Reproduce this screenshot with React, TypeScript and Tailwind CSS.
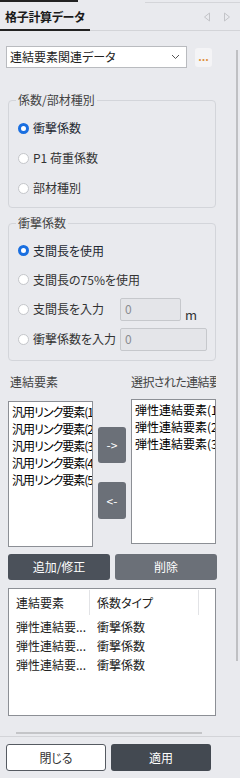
import React from "react";

const left = ["汎用リンク要素(1)", "汎用リンク要素(2)", "汎用リンク要素(3)", "汎用リンク要素(4)", "汎用リンク要素(5)"];
const right = ["弾性連結要素(1)", "弾性連結要素(2)", "弾性連結要素(3)"];

function Radio({ on, label }: { on?: boolean; label: string }) {
  return (
    <label className="flex items-center gap-[4px] ml-[2px] whitespace-nowrap">
      {on ? (
        <span className="w-[11px] h-[11px] rounded-full border-[3px] border-[#1a6fe0] bg-white shrink-0" />
      ) : (
        <span className="w-[11px] h-[11px] rounded-full border border-[#c4c6ca] bg-white shrink-0" />
      )}
      <span className={on ? "text-[#1f2933]" : "text-[#333]"}>{label}</span>
    </label>
  );
}

export default function App() {
  return (
    <div className="relative w-[240px] h-[778px] overflow-hidden bg-[#e9eaee] text-[12px] leading-[16px] text-[#222] font-['Noto_Sans_CJK_JP',sans-serif] [font-feature-settings:'palt']">
      {/* top strip */}
      <div className="flex h-[3px]">
        <div className="w-[78px] h-[2px] bg-[#222]" />
        <div className="ml-[67px] mt-[2px] flex-1 h-px bg-[#d4d5d9]" />
      </div>

      {/* tab header */}
      <div className="flex h-[28px] items-center justify-between border-b border-[#d3d4d8]">
        <div className="relative h-full w-[90px] pl-[5px] flex items-center whitespace-nowrap font-bold text-[12px] tracking-[-0.3px] text-[#1a1a1a]">
          格子計算データ
          <div className="absolute left-0 bottom-[-1px] w-[90px] h-[2px] bg-[#222]" />
        </div>
        <div className="flex items-center gap-[12px] pr-[9px]">
          <svg width="8" height="10" viewBox="0 0 8 10">
            <path d="M6.5 1 L1.5 5 L6.5 9 Z" fill="none" stroke="#c3c4c8" strokeWidth="1" />
          </svg>
          <svg width="8" height="10" viewBox="0 0 8 10">
            <path d="M1.5 1 L6.5 5 L1.5 9 Z" fill="none" stroke="#c3c4c8" strokeWidth="1" />
          </svg>
        </div>
      </div>

      {/* select row */}
      <div className="flex items-start mt-[15px] pl-[6px]">
        <div className="flex w-[181px] h-[22px] items-center justify-between border border-[#b9bbbf] bg-white pl-[3px] pr-[6px] text-[12px]">
          <span>連結要素関連データ</span>
          <svg width="9" height="6" viewBox="0 0 9 6">
            <path d="M1 1 L4.5 4.5 L8 1" fill="none" stroke="#555" strokeWidth="1" />
          </svg>
        </div>
        <div className="ml-[8px] mt-[2px] w-[17px] h-[19px] rounded-[3px] bg-[#f4f4f6] flex items-end justify-center pb-[5px] text-[#e0913c] text-[11px] leading-none font-bold">
          ...
        </div>
      </div>

      {/* fieldset 1 */}
      <fieldset className="mx-[8px] mt-[24px] w-[208px] rounded-[4px] border border-[#d3d5da] px-[7px] pb-[4px]">
        <legend className="px-[2px] text-[#444]">係数/部材種別</legend>
        <div className="flex flex-col pt-[5px]">
          <div className="h-[30px] flex items-center"><Radio on label="衝撃係数" /></div>
          <div className="h-[30px] flex items-center"><Radio label="P1 荷重係数" /></div>
          <div className="h-[30px] flex items-center"><Radio label="部材種別" /></div>
        </div>
      </fieldset>

      {/* fieldset 2 */}
      <fieldset className="mx-[8px] mt-[7px] w-[208px] rounded-[4px] border border-[#d3d5da] px-[7px] pb-[6px]">
        <legend className="px-[2px] text-[#444]">衝撃係数</legend>
        <div className="flex flex-col pt-[5px]">
          <div className="h-[29px] flex items-center"><Radio on label="支間長を使用" /></div>
          <div className="h-[29px] flex items-center"><Radio label="支間長の75%を使用" /></div>
          <div className="h-[30px] flex items-center">
            <div className="w-[104px]"><Radio label="支間長を入力" /></div>
            <div className="w-[61px] h-[23px] border border-[#c6c8cc] rounded-[2px] bg-[#e4e5e9] pl-[4px] flex items-center text-[#8a8c90]">0</div>
            <span className="self-end ml-[4px] mb-[1px] text-[13px] text-[#333]">m</span>
          </div>
          <div className="h-[30px] flex items-center">
            <div className="w-[104px]"><Radio label="衝撃係数を入力" /></div>
            <div className="w-[87px] h-[23px] border border-[#c6c8cc] rounded-[2px] bg-[#e4e5e9] pl-[4px] flex items-center text-[#8a8c90]">0</div>
          </div>
        </div>
      </fieldset>

      {/* lists */}
      <div className="flex mt-[13px] pl-[10px] text-[#444]">
        <div className="w-[121px]">連結要素</div>
        <div className="w-[85px] overflow-hidden whitespace-nowrap tracking-[-0.6px]">選択された連結要素</div>
      </div>
      <div className="flex items-start mt-[9px] pl-[8px]">
        <div className="mt-[2px] w-[85px] h-[146px] overflow-hidden border border-[#8c8f95] bg-white pl-[3px] pt-[1px] leading-[17px] text-black tracking-[-1px]">
          {left.map((t) => (
            <div key={t} className="whitespace-nowrap">{t}</div>
          ))}
        </div>
        <div className="flex flex-col w-[38px] items-center pt-[28px] gap-[19px]">
          <div className="w-[28px] h-[36px] rounded-[3px] bg-[#6b7078] text-white flex items-center justify-center text-[12px]">-&gt;</div>
          <div className="w-[28px] h-[37px] rounded-[3px] bg-[#6b7078] text-white flex items-center justify-center text-[12px]">&lt;-</div>
        </div>
        <div className="w-[85px] h-[145px] overflow-hidden border border-[#8c8f95] bg-white pl-[3px] pt-[1px] leading-[17px] text-black">
          {right.map((t) => (
            <div key={t} className="whitespace-nowrap">{t}</div>
          ))}
        </div>
      </div>

      {/* add / delete */}
      <div className="flex gap-[5px] mt-[7px] pl-[8px]">
        <div className="w-[102px] h-[26px] rounded-[3px] bg-[#4b515a] text-white flex items-center justify-center">追加/修正</div>
        <div className="w-[102px] h-[26px] rounded-[3px] bg-[#6b7078] text-white flex items-center justify-center">削除</div>
      </div>

      {/* table */}
      <div className="mx-[8px] mt-[8px] w-[208px] h-[128px] border border-[#8c8f95] bg-white text-[#222]">
        <div className="flex h-[25px] mt-[1px] items-center">
          <div className="w-[81px] pl-[7px] h-[25px] flex items-center border-r border-[#e2e3e6]">連結要素</div>
          <div className="w-[109px] pl-[7px] h-[25px] flex items-center border-r border-[#e2e3e6]">係数タイプ</div>
        </div>
        <div className="flex flex-col leading-[19px] pt-[2px]">
          {[1, 2, 3].map((i) => (
            <div key={i} className="flex">
              <div className="w-[81px] pl-[7px] whitespace-nowrap">弾性連結要...</div>
              <div className="pl-[7px]">衝撃係数</div>
            </div>
          ))}
        </div>
      </div>

      {/* horizontal scrollbar + divider */}
      <div className="ml-[16px] mt-[16px] w-[186px] h-[2px] bg-[#c4c5c8]" />
      <div className="mt-[2px] h-px bg-[#d3d4d8]" />

      {/* footer buttons */}
      <div className="flex gap-[5px] mt-[7px] pl-[6px]">
        <div className="w-[100px] h-[27px] rounded-[3px] border border-[#555a61] bg-white text-[#333] flex items-center justify-center">閉じる</div>
        <div className="w-[100px] h-[27px] rounded-[3px] bg-[#434951] text-white flex items-center justify-center">適用</div>
      </div>

      {/* vertical scrollbar */}
      <div className="absolute left-[236px] top-[50px] w-[2px] h-[611px] bg-[#bfc0c3]" />
    </div>
  );
}
